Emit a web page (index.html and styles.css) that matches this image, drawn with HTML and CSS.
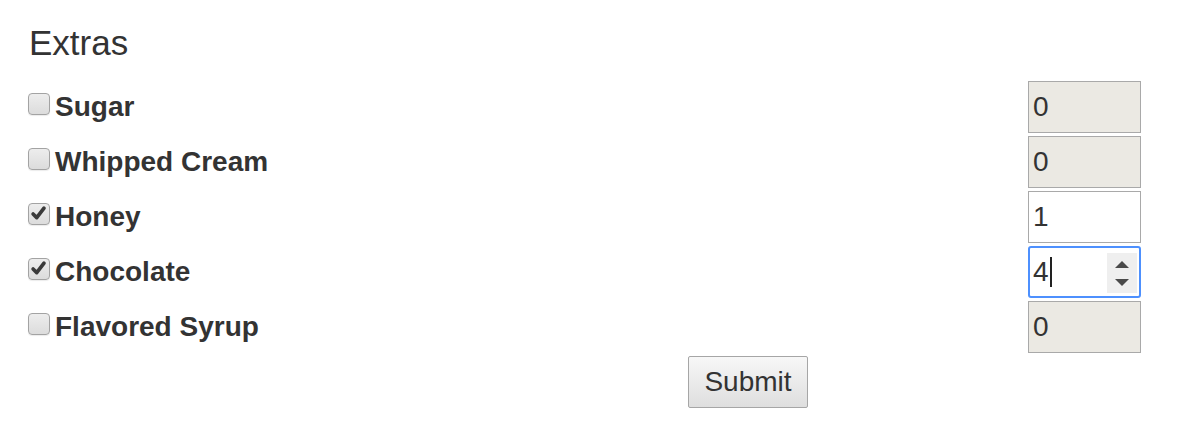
FILE: index.html
```html
<!DOCTYPE html>
<html lang="en">
<head>
    <meta charset="UTF-8">
    <meta name="viewport" content="width=device-width, initial-scale=1.0">
    <title>Extras</title>
    <link rel="stylesheet" href="styles.css">
</head>
<body>
    <form class="extras">
        <h2>Extras</h2>

        <div class="row">
            <label class="item"><span class="box"></span>Sugar</label>
            <div class="qty disabled">0</div>
        </div>
        <div class="row">
            <label class="item"><span class="box"></span>Whipped Cream</label>
            <div class="qty disabled">0</div>
        </div>
        <div class="row">
            <label class="item">
                <span class="box checked">
                    <svg viewBox="0 0 22 22"><path d="M4.5 11 L8.5 15 L16.5 4.5" /></svg>
                </span>Honey</label>
            <div class="qty">1</div>
        </div>
        <div class="row">
            <label class="item">
                <span class="box checked">
                    <svg viewBox="0 0 22 22"><path d="M4.5 11 L8.5 15 L16.5 4.5" /></svg>
                </span>Chocolate</label>
            <div class="qty focused">4<span class="caret"></span>
                <span class="spinner">
                    <svg viewBox="0 0 30 40">
                        <path d="M8 15 L15 8 L22 15 Z" />
                        <path d="M8 26 L15 33 L22 26 Z" />
                    </svg>
                </span>
            </div>
        </div>
        <div class="row">
            <label class="item"><span class="box"></span>Flavored Syrup</label>
            <div class="qty disabled">0</div>
        </div>

        <button type="button" class="submit-btn">Submit</button>
    </form>
</body>
</html>
```

FILE: styles.css
```css
body {
    margin: 0;
    font-family: 'Liberation Sans', Arial, sans-serif;
    color: #333;
    background: #fff;
}
.extras {
    width: 1113px;
    padding: 22px 0 0 28px;
}
h2 {
    margin: 0 0 17px 1px;
    font-size: 35px;
    font-weight: normal;
    line-height: 42px;
}
.row {
    display: flex;
    justify-content: space-between;
    align-items: center;
    height: 52px;
    margin-bottom: 3px;
}
.item {
    display: flex;
    align-items: center;
    font-size: 28px;
    font-weight: bold;
}
.box {
    box-sizing: border-box;
    width: 22px;
    height: 22px;
    margin: 0 5px 6px 0;
    border: 1px solid #a3a3a3;
    border-radius: 4px;
    background: linear-gradient(#ededed, #dcdcdc);
    box-shadow: 0 1px 1px rgba(0, 0, 0, 0.08);
}
.box svg {
    display: block;
    width: 20px;
    height: 20px;
}
.box path {
    fill: none;
    stroke: #3a3a3a;
    stroke-width: 4;
    stroke-linecap: round;
    stroke-linejoin: round;
}
.qty {
    position: relative;
    box-sizing: border-box;
    width: 113px;
    height: 52px;
    padding-left: 4px;
    border: 1px solid #a9a9a9;
    background: #fff;
    font-size: 28px;
    line-height: 50px;
    color: #333;
}
.qty.disabled {
    background: #ebe9e3;
}
.qty.focused {
    border: 2px solid #4d90fe;
    border-radius: 3px;
    padding-left: 3px;
    line-height: 48px;
}
.caret {
    display: inline-block;
    width: 2px;
    height: 30px;
    margin-left: 1px;
    background: #222;
    vertical-align: -6px;
}
.spinner {
    position: absolute;
    right: 2px;
    top: 5px;
    width: 30px;
    height: 40px;
    background: #efefef;
}
.spinner svg {
    display: block;
    width: 30px;
    height: 40px;
}
.spinner path {
    fill: #4a4a4a;
}
.submit-btn {
    margin: 0 0 0 660px;
    width: 120px;
    height: 52px;
    border: 1px solid #a6a6a6;
    border-radius: 2px;
    background: linear-gradient(#f7f7f7, #dedede);
    color: #333;
    font-family: 'Liberation Sans', Arial, sans-serif;
    font-size: 28px;
}
```
